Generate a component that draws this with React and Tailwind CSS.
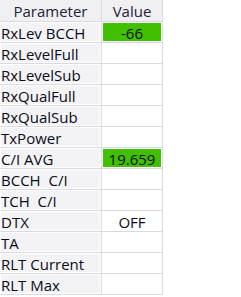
const rows = [
  { name: "RxLev BCCH", value: "-66", hi: true },
  { name: "RxLevelFull" },
  { name: "RxLevelSub" },
  { name: "RxQualFull" },
  { name: "RxQualSub" },
  { name: "TxPower" },
  { name: "C/I AVG", value: "19.659", hi: true },
  { name: "BCCH  C/I" },
  { name: "TCH  C/I" },
  { name: "DTX", value: "OFF" },
  { name: "TA" },
  { name: "RLT Current" },
  { name: "RLT Max" },
];

export default function App() {
  return (
    <div className="w-[241px] h-[297px] bg-white overflow-hidden font-['Open_Sans',sans-serif] text-[15px] text-[#0c0c18]">
      <div className="w-[163px]">
        <div className="flex h-[22px] border-b border-[#d9d9e1]">
          <div className="w-[102px] border-r border-[#d9d9e1] bg-[#f0f0f3] flex items-center justify-center leading-none pt-[2px] text-[#22223a]">
            Parameter
          </div>
          <div className="w-[61px] border-r border-[#d9d9e1] bg-[#f0f0f3] flex items-center justify-center leading-none pt-[2px] text-[#22223a]">
            Value
          </div>
        </div>
        {rows.map((r) => (
          <div key={r.name} className="flex h-[21px] border-b border-[#d9d9e1]">
            <div className="w-[102px] border-r border-[#d9d9e1] p-px">
              <div className="h-full bg-[#f3f3f6] flex items-center whitespace-pre leading-none pt-[3px]">
                {r.name}
              </div>
            </div>
            <div className="w-[61px] border-r border-[#d9d9e1] p-px">
              <div
                className={
                  "h-full flex items-center justify-center leading-none pt-[3px] " +
                  (r.hi ? "bg-[#41c000]" : "bg-white")
                }
              >
                {r.value}
              </div>
            </div>
          </div>
        ))}
      </div>
    </div>
  );
}
